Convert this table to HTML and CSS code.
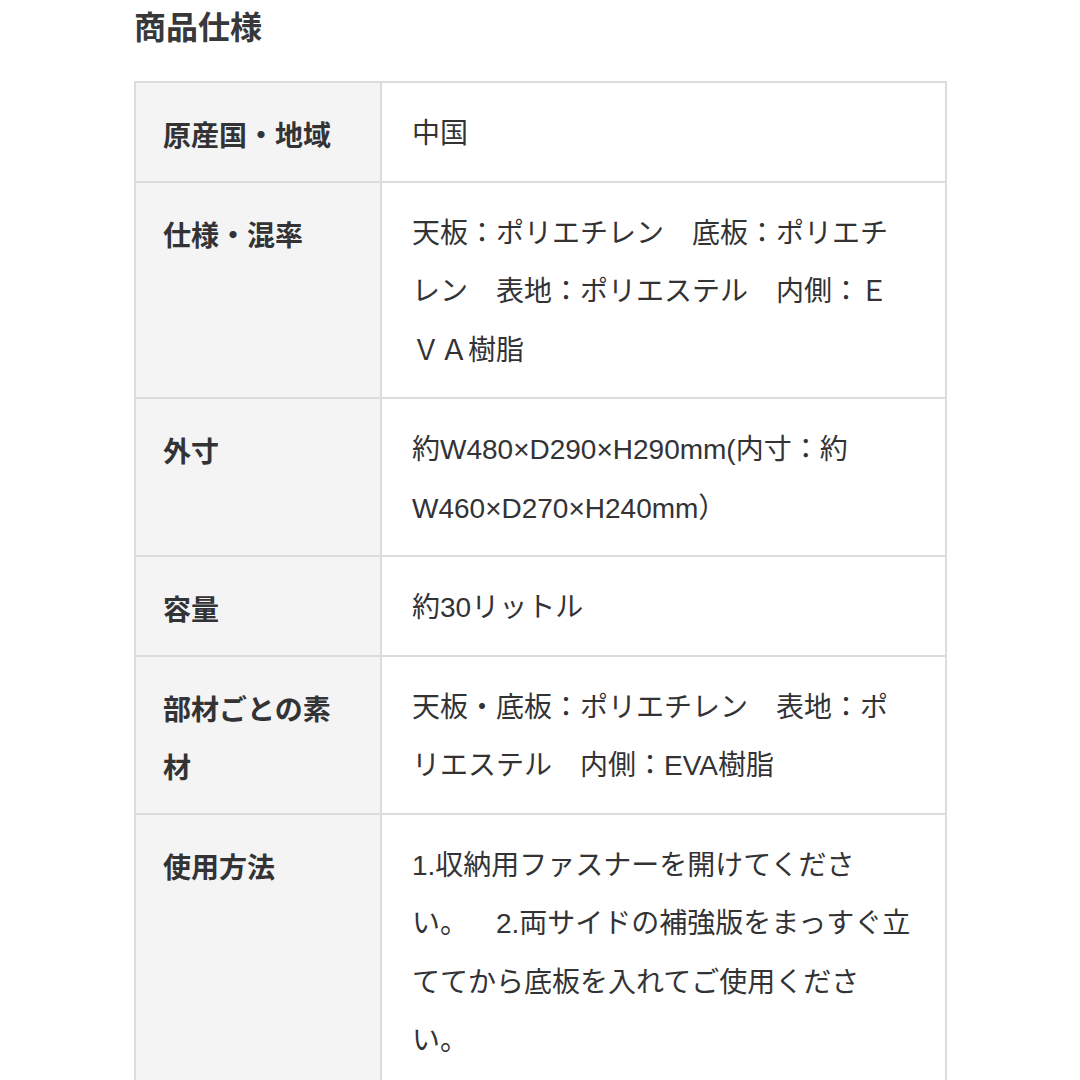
FILE: index.html
```html
<!DOCTYPE html>
<html lang="ja">
<head>
<meta charset="utf-8">
<title>商品仕様</title>
<link rel="stylesheet" href="styles.css">
</head>
<body>
<section class="spec">
  <h2 class="spec-title">商品仕様</h2>
  <table class="spec-table">
    <tbody>
      <tr>
        <th>原産国・地域</th>
        <td>中国</td>
      </tr>
      <tr>
        <th>仕様・混率</th>
        <td>天板：ポリエチレン　底板：ポリエチレン　表地：ポリエステル　内側：ＥＶＡ樹脂</td>
      </tr>
      <tr>
        <th>外寸</th>
        <td>約W480×D290×H290mm(内寸：約W460×D270×H240mm）</td>
      </tr>
      <tr>
        <th>容量</th>
        <td>約30リットル</td>
      </tr>
      <tr>
        <th>部材ごとの素材</th>
        <td>天板・底板：ポリエチレン　表地：ポリエステル　内側：EVA樹脂</td>
      </tr>
      <tr>
        <th>使用方法</th>
        <td>1.収納用ファスナーを開けてください。　2.両サイドの補強版をまっすぐ立ててから底板を入れてご使用ください。</td>
      </tr>
    </tbody>
  </table>
</section>
</body>
</html>
```

FILE: styles.css
```css
html, body {
  margin: 0;
  padding: 0;
  background: #ffffff;
}

body {
  font-family: "Liberation Sans", "Noto Sans CJK JP", sans-serif;
  color: #333336;
}

.spec {
  padding: 0 0 0 134px;
  width: 813px;
}

.spec-title {
  margin: 0;
  font-size: 32px;
  line-height: 51px;
  font-weight: 700;
  color: #38383b;
  font-family: "Noto Sans CJK JP", sans-serif;
}

.spec-table {
  margin-top: 30px;
  width: 813px;
  border-collapse: separate;
  border-spacing: 0;
  border-top: 2px solid #dcdcdc;
  border-left: 2px solid #dcdcdc;
  table-layout: fixed;
}

.spec-table th,
.spec-table td {
  border-right: 2px solid #dcdcdc;
  border-bottom: 2px solid #dcdcdc;
  font-size: 28px;
  line-height: 58.5px;
  vertical-align: top;
  text-align: left;
  padding-top: 22px;
  padding-bottom: 17px;
  text-spacing-trim: space-all;
}

.spec-table th {
  width: 190px;
  padding-left: 27px;
  padding-right: 27px;
  background: #f4f4f4;
  font-weight: 700;
  font-family: "Noto Sans CJK JP", sans-serif;
}

.spec-table td {
  padding-left: 30px;
  padding-right: 30px;
  font-weight: 400;
  white-space: break-spaces;
}
```
